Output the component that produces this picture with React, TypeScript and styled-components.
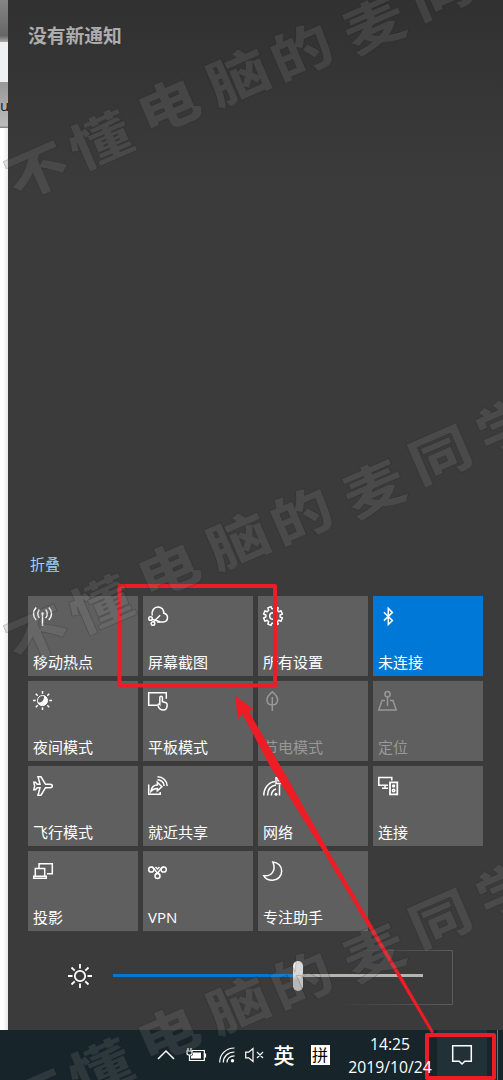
import React from 'react';
import styled, { createGlobalStyle } from 'styled-components';

const Global = createGlobalStyle`
  * { box-sizing: border-box; }
  body { margin: 0; background: #fff; overflow: hidden; }
`;

const Screen = styled.main`
  position: relative;
  display: flex;
  flex-direction: column;
  width: 503px;
  height: 1080px;
  overflow: hidden;
  font-family: "Open Sans", "Noto Sans CJK SC", sans-serif;
`;

const Desktop = styled.div`
  display: flex;
  height: 1030px;
`;

const WindowEdge = styled.div`
  width: 8px;
  background: linear-gradient(90deg, #fff 40%, #e8e8e8);
`;
const EdgeBand = styled.div<{ $h: number; $bg: string }>`
  height: ${p => p.$h}px;
  background: ${p => p.$bg};
  overflow: hidden;
  color: #10182c;
  font-size: 15px;
  line-height: 46px;
`;

const ActionCenter = styled.section`
  width: 495px;
  padding: 0 20px;
  background: linear-gradient(#313131, #343434 60px, #3b3b3b 180px, #3b3b3b);
`;

const Empty = styled.h1`
  margin: 0;
  height: 553px;
  padding-top: 21px;
  font-size: 18.8px;
  line-height: 28px;
  font-weight: 700;
  color: #adadad;
  font-family: "Noto Sans CJK SC", sans-serif;
`;

const Collapse = styled.div`
  height: 43px;
  padding-left: 2px;
  font-size: 15px;
  line-height: 23px;
  color: #9bd0fb;
`;

const Grid = styled.div`
  display: grid;
  grid-template-columns: repeat(4, 110px);
  grid-auto-rows: 80px;
  gap: 5px;
`;

const Tile = styled.button<{ $state?: 'on' | 'off' }>`
  display: flex;
  flex-direction: column;
  justify-content: space-between;
  align-items: flex-start;
  border: 0;
  padding: 10px 5px 3px;
  background: ${p => (p.$state === 'on' ? '#0078d7' : '#5f5f5f')};
  color: ${p => (p.$state === 'off' ? '#989898' : '#fff')};
  font-family: inherit;
  font-size: 15px;
  line-height: 21px;
  white-space: nowrap;
`;

const Glyph = styled.svg`
  display: block;
  overflow: visible;
  fill: none;
  stroke: currentColor;
  stroke-width: 1.5;
`;

const Brightness = styled.div`
  display: flex;
  align-items: center;
  height: 89px;
  padding-left: 40px;
  color: #fff;
`;
const Track = styled.div`
  display: flex;
  align-items: center;
  width: 310px;
  margin-left: 21px;
`;
const Bar = styled.div<{ $w: number; $c: string }>`
  width: ${p => p.$w}px;
  height: 3px;
  background: ${p => p.$c};
`;
const Thumb = styled.div`
  width: 10px;
  height: 30px;
  border-radius: 5px;
  background: linear-gradient(165deg, #ececec 45%, #c4c4c4 60%);
`;

const HoverFrame = styled.svg`
  position: absolute;
  left: 335px;
  top: 949px;
`;

const Taskbar = styled.footer`
  display: flex;
  height: 50px;
  padding-left: 157px;
  background: #17252b;
  color: #fff;
`;
const TrayItem = styled.div<{ $w: number }>`
  display: flex;
  align-items: center;
  justify-content: center;
  width: ${p => p.$w}px;
  height: 50px;
`;
const Lang = styled(TrayItem)`
  font: 500 21px/50px "Noto Sans CJK SC", sans-serif;
  padding-bottom: 3px;
`;
const Ime = styled.div`
  width: 19px;
  height: 20px;
  background: #fff;
  color: #000;
  font: 400 16px/19px "Noto Sans CJK SC", sans-serif;
  text-align: center;
`;
const Clock = styled.div`
  position: relative;
  z-index: 1;
  width: 90px;
  padding-top: 3px;
  text-align: center;
  font-size: 15.7px;
  line-height: 23px;
`;
const ActionButton = styled.div`
  display: flex;
  align-items: center;
  justify-content: center;
  width: 50px;
  height: 50px;
  margin-left: 2px;
  background: #223037;
`;
const ShowDesktop = styled.div`
  width: 6px;
  margin-left: 10px;
  border-left: 1px solid #6c777b;
`;

const Overlay = styled.svg`
  position: absolute;
  inset: 0;
  pointer-events: none;
`;

const gear = (() => {
  const pts: string[] = [];
  for (let i = 0; i < 8; i++) {
    const a = (i * Math.PI) / 4 + Math.PI / 8;
    [[-0.25, 7.2], [-0.18, 9.6], [0.18, 9.6], [0.25, 7.2]].forEach(([d, r]) => {
      pts.push(`${(10 + r * Math.cos(a + d)).toFixed(2)},${(10 + r * Math.sin(a + d)).toFixed(2)}`);
    });
  }
  return pts.join(' ');
})();

const icons: Record<string, React.ReactNode> = {
  hotspot: (
    <>
      <path d="M9.5 8v12" />
      <circle cx="9.5" cy="7.5" r="1.2" fill="currentColor" stroke="none" />
      <path d="M6.4 3.5C4.2 5.8 4.2 9.8 6.4 12M12.6 3.5c2.2 2.3 2.2 6.3 0 8.5M3.2 1.5C-.4 5-.4 10.5 3.2 14M15.8 1.5c3.6 3.5 3.6 9 0 12.5" />
    </>
  ),
  snip: (
    <>
      <path d="M4.3 9.5C3.2 5 6 .9 10 .9c3.7 0 6 2.6 5.7 6.3 2.3.4 3.800 2 3.800 4.400 0 2.800-1.800 4.400-4.500 4.400H9" />
      <circle cx="2.5" cy="12.5" r="1.8" />
      <circle cx="5" cy="17.5" r="1.8" />
      <path d="M4.1 13.2l7.900 2.500M5.500 15.800l6.700-6.600" />
    </>
  ),
  gear: (
    <>
      <polygon points={gear} strokeLinejoin="round" />
      <circle cx="10" cy="10" r="3.3" />
    </>
  ),
  bluetooth: <path d="M5.9 6.3l8.500 8.200-4.100 4V2.400l4.100 4-8.500 8.200" />,
  night: (
    <>
      <path d="M9.500 0v2.700M9.500 16.300V19M0 9.500h2.700M16.300 9.500H19M2.800 2.800l1.900 1.900M14.300 14.300l1.900 1.900M2.800 16.200l1.900-1.900M14.300 4.700l1.900-1.900" />
      <circle cx="9.500" cy="9.500" r="5" strokeWidth="1" />
      <path d="M11 4.500a5.300 5.300 0 1 1-6.700 7C9 12.300 11.500 9 11 4.500z" fill="currentColor" stroke="none" />
    </>
  ),
  tablet: (
    <>
      <path d="M9 14.300H.7V1.700h17.600v6" />
      <path d="M11.800 13.500V6.700c0-2 2.600-2 2.600 0v4l3 .8c1.200.3 1.800 1 1.800 2.200 0 3.500-1 5.300-3.800 5.300-3 0-4.500-1-5.500-4.500-.4-1.500 1-2 1.900-1z" />
    </>
  ),
  leaf: <path d="M9.300 6v14M9.300.8C6.500 3 4 5.500 4 8.800c0 3 2 5.200 5.300 5.200s5.300-2.200 5.300-5.200c0-3.300-2.500-5.800-5.300-8z" />,
  location: (
    <>
      <circle cx="9.500" cy="3.200" r="2.600" />
      <path d="M9.500 5.800V15M7 9.500H4L.8 19h17.400L15 9.500h-3" />
    </>
  ),
  plane: (
    <path d="M5 .8h3l4.500 7.500h4.300c3.400 0 3.400 3.400 0 3.400h-4.300L8 19.200H5l2-7.500H4.200l-1.700 2H.8L1.700 10 .8 6.300h1.700l1.700 2H7z" />
  ),
  share: (
    <>
      <path d="M.7 8.500v9.800h11.500V16M3 15.200c.5-4 2.500-6.300 6.300-6.300V6.300l4.600 4.400-4.600 4.200v-2.500C6.500 12.300 4.700 13.200 3 15.200z" />
      <path d="M9.500.8c5.500 0 9.700 4 9.700 9.200M9.500 3.800c3.700 0 6.700 2.700 6.700 6.200" />
    </>
  ),
  network: (
    <>
      <path d="M.8 19.500C.8 12 5.500 6.300 12 5.500M4.600 19.500c0-5.500 3-9.600 8.400-10.500M8.400 19.500c0-3.300 1.600-5.500 4.600-6.500" />
      <circle cx="13" cy="18.300" r="1.500" fill="currentColor" stroke="none" />
      <path d="M16.500 8.500v11M13 1.800h7v5.700h-7zM15 1.800v3h3" />
    </>
  ),
  connect: (
    <>
      <path d="M10 9.300H.8V1.500h13v3M4 12.300h6M7 9.300v3" />
      <path d="M12 6.300h7.300v12H12z" strokeWidth="1.800" />
      <circle cx="15.600" cy="10" r="1" fill="currentColor" />
      <circle cx="15.600" cy="14.500" r="1.200" />
    </>
  ),
  project: (
    <>
      <path d="M6 7V2.700h13.300v10H14" />
      <path d="M2.300 15V7.500h9.400V15M.7 15.300h12.600v2H.7z" />
    </>
  ),
  vpn: (
    <>
      <circle cx="3.300" cy="8.500" r="2.600" />
      <circle cx="15.700" cy="8.500" r="2.600" />
      <circle cx="9.500" cy="15" r="2.500" />
      <path d="M3.300 5.900C7 5.900 6.500 11 11.500 13.500M15.700 5.900C12 5.900 12.500 11 7.500 13.500M7.500 6l2 2 2-2" />
    </>
  ),
  moon: <path d="M9.800 1c5.200.4 8.900 4 8.900 9 0 5.300-4 9.300-9.200 9.300-4 0-7.300-1.500-8.700-4.500C8.500 15.500 13.500 9.500 9.800 1z" />,
};

const tiles: { icon: string; label: string; state?: 'on' | 'off' }[] = [
  { icon: 'hotspot', label: '移动热点' },
  { icon: 'snip', label: '屏幕截图' },
  { icon: 'gear', label: '所有设置' },
  { icon: 'bluetooth', label: '未连接', state: 'on' },
  { icon: 'night', label: '夜间模式' },
  { icon: 'tablet', label: '平板模式' },
  { icon: 'leaf', label: '节电模式', state: 'off' },
  { icon: 'location', label: '定位', state: 'off' },
  { icon: 'plane', label: '飞行模式' },
  { icon: 'share', label: '就近共享' },
  { icon: 'network', label: '网络' },
  { icon: 'connect', label: '连接' },
  { icon: 'project', label: '投影' },
  { icon: 'vpn', label: 'VPN' },
  { icon: 'moon', label: '专注助手' },
];

const Mark = styled.text`
  font: 900 56px "Noto Sans CJK SC", sans-serif;
  text-anchor: middle;
  dominant-baseline: central;
  fill: rgba(135, 135, 135, 0.2);
  stroke: rgba(20, 20, 20, 0.22);
  stroke-width: 0.8;
`;

const marks: [string, number, number][] = [
  ['不', 36, 168],
  ['懂', 99, 138],
  ['电', 167, 103],
  ['脑', 237, 74],
  ['的', 300, 49],
  ['麦', 373, 22],
  ['同', 439, -12],
  ['学', 506, -42],
];

export default function App() {
  return (
    <Screen>
      <Global />
      <Desktop>
        <WindowEdge>
          <EdgeBand $h={42} $bg="linear-gradient(#858585, #666 85%, #aaa)" />
          <EdgeBand $h={40} $bg="#eff0f2" />
          <EdgeBand $h={46} $bg="linear-gradient(#979797, #bcbcbc 95%, #777)">u</EdgeBand>
        </WindowEdge>
        <ActionCenter>
          <Empty>没有新通知</Empty>
          <Collapse>折叠</Collapse>
          <Grid>
            {tiles.map(t => (
              <Tile key={t.label} $state={t.state}>
                <Glyph width="20" height="20" viewBox="0 0 20 20">{icons[t.icon]}</Glyph>
                {t.label}
              </Tile>
            ))}
          </Grid>
          <Brightness>
            <Glyph width="24" height="24" viewBox="0 0 24 24">
              <circle cx="12" cy="12" r="5.200" strokeWidth="1.800" />
              <path strokeWidth="1.800" d="M12 0v4.500M12 19.500V24M0 12h4.500M19.500 12H24M3.500 3.500l3.200 3.200M17.300 17.300l3.200 3.200M3.500 20.500l3.200-3.200M17.300 6.700l3.200-3.200" />
            </Glyph>
            <Track>
              <Bar $w={180} $c="#0078d7" />
              <Thumb />
              <Bar $w={120} $c="#b4b4b0" />
            </Track>
          </Brightness>
        </ActionCenter>
      </Desktop>
      <HoverFrame width="120" height="58">
        <defs>
          <linearGradient id="frame" gradientUnits="userSpaceOnUse" x1="0" y1="0" x2="118" y2="0">
            <stop offset="0" stopColor="#5c5c5c" stopOpacity="0" />
            <stop offset="1" stopColor="#5c5c5c" />
          </linearGradient>
        </defs>
        <path d="M0 1.500h117.500v54H10" fill="none" stroke="url(#frame)" />
      </HoverFrame>
      <Taskbar>
        <TrayItem $w={18}>
          <Glyph width="18" height="10" viewBox="0 0 18 10"><path d="M1 9l8-8 8 8" /></Glyph>
        </TrayItem>
        <TrayItem $w={42}>
          <Glyph width="20" height="16" viewBox="0 0 20 16">
            <path d="M6 3.500h12.300v10H3.500V9M19.500 6.500v4M1 4h5v2.500c0 2-5 2-5 0zM2 1v3M5 1v3M3.500 8v5" strokeWidth="1.200" />
            <path d="M7 5.500h8v6H5V9l2-1z" fill="currentColor" stroke="none" />
          </Glyph>
        </TrayItem>
        <TrayItem $w={20}>
          <Glyph width="16" height="16" viewBox="0 0 16 16">
            <path d="M.7 15.500C.7 7 7 1 15.500 1M4.300 15.500C4.300 9.500 9 5 15.500 5M8 15.500C8 11.500 11 8.800 15.500 8.800" strokeWidth="1.200" />
            <circle cx="13.500" cy="13.800" r="1.700" fill="currentColor" stroke="none" />
          </Glyph>
        </TrayItem>
        <TrayItem $w={36}>
          <Glyph width="20" height="16" viewBox="0 0 20 16">
            <path d="M.7 5.200h3L8 1.500v13l-4.300-3.700h-3zM12 5l6 6M18 5l-6 6" strokeWidth="1.200" />
          </Glyph>
        </TrayItem>
        <Lang $w={22}>英</Lang>
        <TrayItem $w={50}><Ime>拼</Ime></TrayItem>
        <Clock>14:25<br />2019/10/24</Clock>
        <ActionButton>
          <Glyph width="20" height="20" viewBox="0 0 20 20">
            <path d="M.7.7h18.600v15.600h-6.500L10 19l-2.800-2.700H.7z" />
          </Glyph>
        </ActionButton>
        <ShowDesktop />
      </Taskbar>
      <Overlay width="503" height="1080" viewBox="0 0 503 1080">
        <g fill="none" stroke="#ee1c25" strokeWidth="4" strokeLinejoin="round">
          <rect x="119.500" y="586" width="155.500" height="99.500" />
          <rect x="427" y="1035" width="67" height="43" />
        </g>
        <polygon
          fill="#ee1c25"
          points="235,695.500 253.500,709 248.500,711 280.500,766 328,850 434,1032 431.500,1033.500 322.500,850 270,766 242.500,714 238,719"
        />
        {[0, 464, 928].map(dy =>
          marks
            .filter(([, , y]) => y + dy > -30)
            .map(([c, x, y]) => (
              <Mark key={`${c}${dy}`} transform={`translate(${x} ${y + dy}) rotate(-23.500) scale(1.120 0.940)`}>
                {c}
              </Mark>
            )),
        )}
      </Overlay>
    </Screen>
  );
}
